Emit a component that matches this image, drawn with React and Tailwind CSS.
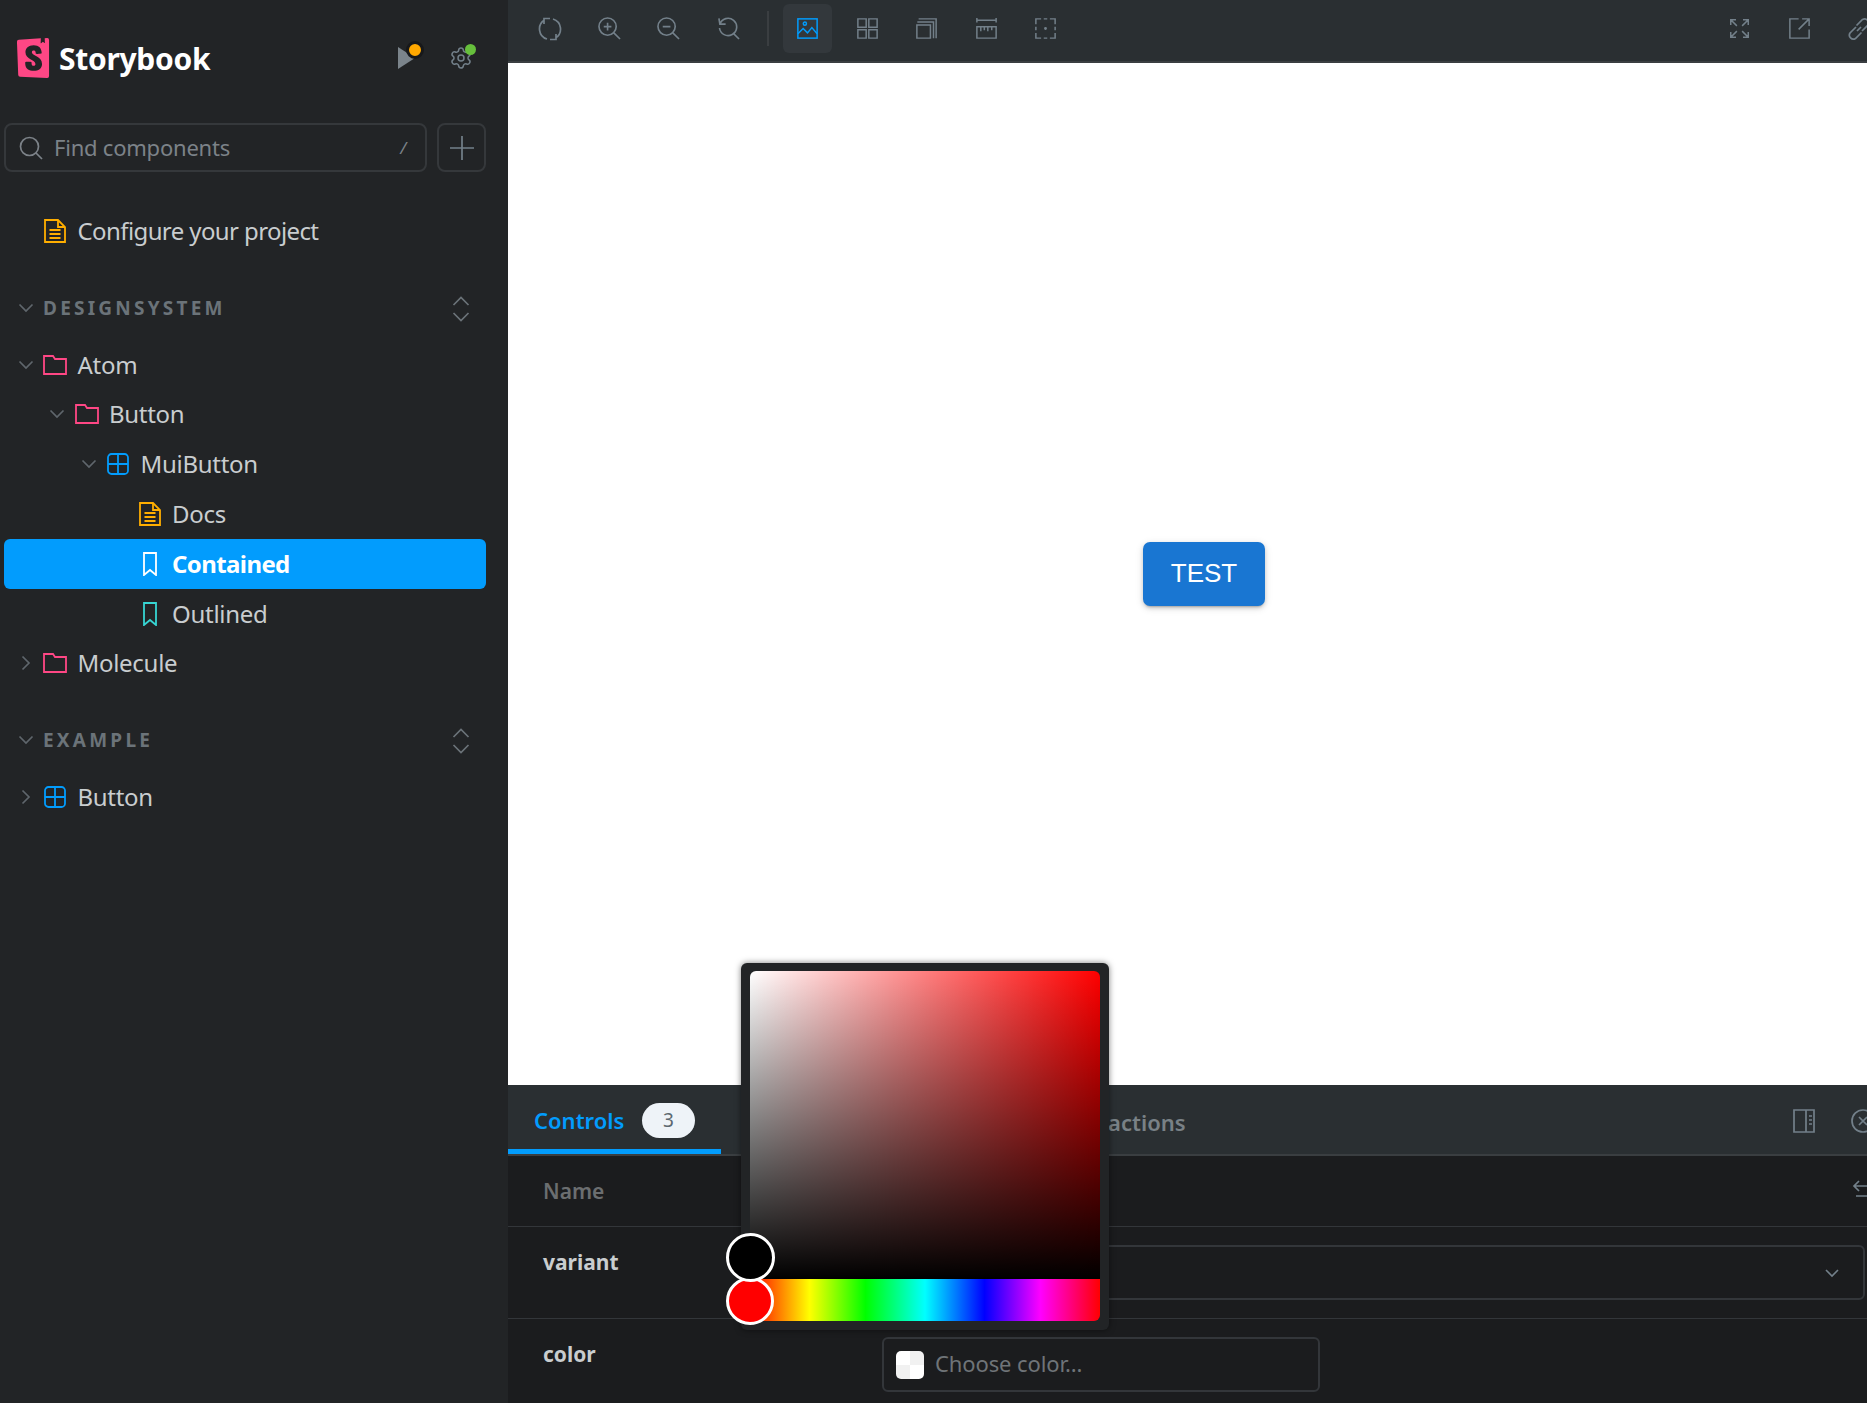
import React from "react";
import { SiStorybook } from "react-icons/si";
import { Settings } from "lucide-react";

const font = "font-['Noto_Sans',sans-serif]";

const Icon = ({ children, className = "", size = 24 }) => (
  <svg
    width={size}
    height={size}
    viewBox="0 0 24 24"
    fill="none"
    stroke="currentColor"
    strokeWidth="1.7"
    className={"shrink-0 " + className}
  >
    {children}
  </svg>
);

const Chevron = ({ open }) => (
  <svg width="16" height="16" viewBox="0 0 16 16" fill="none" stroke="#5f666c" strokeWidth="1.7" className="shrink-0">
    {open ? <path d="M1.5 4.5 8 11l6.5-6.5" /> : <path d="M4.5 1.5 11 8l-6.5 6.5" />}
  </svg>
);

const DocIcon = () => (
  <svg width="22" height="24" viewBox="0 0 22 24" fill="none" stroke="#ffae00" strokeWidth="1.8" className="shrink-0">
    <path d="M1 1h13l7 7v15H1z" />
    <path d="M14 1v7h7" />
    <path d="M5.5 11h11M5.5 15h11M5.5 19h11" />
  </svg>
);

const FolderIcon = () => (
  <svg width="24" height="20" viewBox="0 0 24 20" fill="none" stroke="#ff4785" strokeWidth="1.8" className="shrink-0">
    <path d="M1 1h9l2 3h11v15H1z" />
  </svg>
);

const ComponentIcon = () => (
  <svg width="22" height="22" viewBox="0 0 22 22" fill="none" stroke="#029cfd" strokeWidth="1.8" className="shrink-0">
    <rect x="1" y="1" width="20" height="20" rx="3.5" />
    <path d="M11 1v20M1 11h20" />
  </svg>
);

const BookmarkIcon = ({ color }) => (
  <svg width="14" height="24" viewBox="0 0 14 24" fill="none" stroke={color} strokeWidth="1.8" className="shrink-0">
    <path d="M1 1h12v22l-6-5-6 5z" />
  </svg>
);

const ExpandAll = () => (
  <svg width="18" height="26" viewBox="0 0 18 26" fill="none" stroke="#6b7379" strokeWidth="1.7">
    <path d="M1.5 9 9 1.5 16.5 9M1.5 17 9 24.5 16.5 17" />
  </svg>
);

const TreeRow = ({ level = 0, chevron, icon, label, active, tight }) => (
  <div
    className={
      "flex h-[49.8px] items-center rounded-md text-[24px] " +
      (active ? "bg-[#029cfd] font-bold text-white " : "text-[#c9cdcf] ") +
      (tight || active ? "tracking-[-0.025em]" : "tracking-[-0.012em]")
    }
    style={{ paddingLeft: 13.5 + level * 31.5 }}
  >
    <div className="flex w-[25px] shrink-0">{chevron !== undefined && <Chevron open={chevron} />}</div>
    <div className="flex w-[35px] shrink-0 items-center justify-center pr-[10px]">{icon}</div>
    <span>{label}</span>
  </div>
);

const SectionRow = ({ label, className = "" }) => (
  <div className={"flex h-[50px] items-center pl-[13.5px] pr-[16px] " + className}>
    <div className="flex w-[25.5px] shrink-0">
      <Chevron open />
    </div>
    <span className="text-[19px] font-bold tracking-[0.17em] text-[#6b7379]">{label}</span>
    <div className="ml-auto mt-[2px]">
      <ExpandAll />
    </div>
  </div>
);

const Sidebar = () => (
  <aside className="flex h-full w-[508px] shrink-0 flex-col bg-[#222426] px-1">
    <div className="relative flex h-[116px] shrink-0 items-center pl-[9px]">
      <SiStorybook size={40} className="text-[#ff4785]" />
      <span className="ml-[6px] text-[30px] font-bold tracking-[-0.01em] text-white">Storybook</span>
      <div className="absolute left-[394px] top-[47px] h-0 w-0 border-y-[11px] border-l-[17px] border-y-transparent border-l-[#7b848b]" />
      <div className="absolute left-[402px] top-[41px] h-[18px] w-[18px] rounded-full border-[3px] border-[#17181a] bg-[#ffa800]" />
      <div className="absolute left-[445px] top-[46px] text-[#73808a]">
        <Settings size={24} strokeWidth={1.5} />
        <div className="absolute left-[16px] top-[-2px] h-[11px] w-[11px] rounded-full bg-[#66bf3c]" />
      </div>
    </div>

    <div className="mt-[7px] flex h-[49px] shrink-0 gap-[10px]">
      <div className="flex w-[423px] items-center rounded-lg border-2 border-[#35383b] pl-[13px] pr-[19px] text-[22px] tracking-[-0.01em] text-[#7c8288]">
        <Icon>
          <circle cx="10.5" cy="10.5" r="9" />
          <path d="m17 17 6 6" />
        </Icon>
        <span className="ml-[11px]">Find components</span>
        <span className="ml-auto text-[17px] italic">/</span>
      </div>
      <div className="flex w-[49px] items-center justify-center rounded-lg border-2 border-[#35383b] text-[#73808a]">
        <Icon>
          <path d="M12 0v24M0 12h24" />
        </Icon>
      </div>
    </div>

    <div className="mt-[34px] w-[482px]">
      <TreeRow icon={<DocIcon />} label="Configure your project" tight />
    </div>

    <SectionRow label="DESIGNSYSTEM" className="mt-[27px] w-[482px]" />

    <div className="mt-[7px] w-[482px]">
      <TreeRow level={0} chevron={true} icon={<FolderIcon />} label="Atom" />
      <TreeRow level={1} chevron={true} icon={<FolderIcon />} label="Button" />
      <TreeRow level={2} chevron={true} icon={<ComponentIcon />} label="MuiButton" />
      <TreeRow level={3} icon={<DocIcon />} label="Docs" />
      <TreeRow level={3} icon={<BookmarkIcon color="#ffffff" />} label="Contained" active />
      <TreeRow level={3} icon={<BookmarkIcon color="#37d5d3" />} label="Outlined" />
      <TreeRow level={0} chevron={false} icon={<FolderIcon />} label="Molecule" />
    </div>

    <SectionRow label="EXAMPLE" className="mt-[27px] w-[482px]" />

    <div className="mt-[7px] w-[482px]">
      <TreeRow level={0} chevron={false} icon={<ComponentIcon />} label="Button" />
    </div>
  </aside>
);

const ToolIcon = ({ children, active, size = 21 }) => (
  <div
    className={
      "flex h-[49px] w-[49px] items-center justify-center rounded-md " +
      (active ? "bg-[#33383c] text-[#029cfd]" : "text-[#73808a]")
    }
  >
    <Icon size={size}>{children}</Icon>
  </div>
);

const Toolbar = () => (
  <div className="flex h-[63px] shrink-0 items-start gap-[10.5px] border-b-2 border-[#3a3e41] bg-[#2a2f32] pl-[17px] pr-[17px] pt-1">
    <ToolIcon size={24}>
      <path d="M6 7V1.500h6M6.500 3A10.500 10.500 0 0 0 9 22M18 17v5.500h-6M17.500 21A10.500 10.500 0 0 0 15 2" />
    </ToolIcon>
    <ToolIcon size={23}>
      <circle cx="10" cy="10" r="9" />
      <path d="m16.500 16.500 6.500 6.500M10 6v8M6 10h8" />
    </ToolIcon>
    <ToolIcon size={23}>
      <circle cx="10" cy="10" r="9" />
      <path d="m16.500 16.500 6.500 6.500M6 10h8" />
    </ToolIcon>
    <ToolIcon size={23}>
      <path d="M3 7.500a9 9 0 1 1-.4 4M2 1.500l1 6h6M16.500 16.500l6.500 6.500" />
    </ToolIcon>
    <div className="ml-[4px] mr-[3.5px] mt-[7px] h-[35px] w-[2px] shrink-0 bg-[#3a3e41]" />
    <ToolIcon active>
      <rect x="1" y="1" width="22" height="22" />
      <circle cx="9" cy="6.500" r="1.800" />
      <path d="m1 18 6-6 5 5 5-6 6 7" />
    </ToolIcon>
    <ToolIcon>
      <path d="M1 1h9.500v9.500H1zM13.500 1H23v9.500h-9.500zM1 13.500h9.500V23H1zM13.500 13.500H23V23h-9.500z" />
    </ToolIcon>
    <ToolIcon>
      <path d="M1 8h15.500v15H1zM1.500 4.500H20V23M3 1h20v22" />
    </ToolIcon>
    <ToolIcon>
      <path d="M1 0v5M23 0v5M1 2.500h22M1 10h22v13H1zM5.500 10v5M9.500 10v4M13.500 10v5M18 10v4" />
    </ToolIcon>
    <ToolIcon>
      <path d="M1 7V1h6M10 1h4M17 1h6v6M23 10v4M23 17v6h-6M14 23h-4M7 23H1v-6M1 14v-4" />
      <circle cx="12" cy="12" r="0.800" fill="currentColor" />
    </ToolIcon>

    <div className="ml-auto" />
    <ToolIcon>
      <path d="M9 9 2 2M2 8V2h6M15 9l7-7M16 2h6v6M9 15l-7 7M2 16v6h6M15 15l7 7M22 16v6h-6" />
    </ToolIcon>
    <ToolIcon>
      <path d="M11 1H1v22h22V13M11 13 23 1M15 1h8v8" />
    </ToolIcon>
    <ToolIcon size={24}>
      <path d="M10 14 14 10M9 10 3 16a4 4 0 0 0 5.500 5.500l6-6M15 14l6-6a4 4 0 0 0-5.500-5.500l-6 6" />
    </ToolIcon>
  </div>
);

const Canvas = () => (
  <div className="flex flex-1 items-center justify-center bg-white">
    <button className="flex h-[64px] w-[122px] items-center justify-center rounded-[7px] bg-[#1976d2] pb-[2px] font-['Liberation_Sans',sans-serif] text-[26px] text-white shadow-[0_3px_2px_-2px_rgba(0,0,0,0.2),0_2px_4px_0_rgba(0,0,0,0.14),0_2px_8px_0_rgba(0,0,0,0.12)]">
      TEST
    </button>
  </div>
);

const Panel = () => (
  <div className="flex h-[318px] shrink-0 flex-col bg-[#1b1c1e]">
    <div className="flex h-[71px] shrink-0 items-center border-b-2 border-[#3a3e41] bg-[#2a2f32] pr-[25px]">
      <div className="flex h-full w-[213px] items-center border-b-[5px] border-[#029cfd] pl-[26px] pt-[6px]">
        <span className="w-[90px] text-[22px] font-semibold text-[#029cfd]">Controls</span>
        <span className="ml-[18px] flex h-[35px] w-[53px] items-center justify-center rounded-full bg-[#eef3f8] text-[19px] text-[#5c6870]">3</span>
      </div>
      <span className="w-[333px] pt-[6px] text-center text-[22px] font-semibold text-[#798186]">Actions</span>
      <span className="pl-[1px] pt-[6px] text-[22px] font-semibold text-[#798186]">Interactions</span>
      <div className="ml-auto flex items-center gap-[35px] pt-[2px] text-[#73808a]">
        <Icon>
          <path d="M2 1h20v22H2zM14 1v22M17 7h3M17 11h3M17 15h3" />
        </Icon>
        <Icon>
          <circle cx="12" cy="12" r="11" />
          <path d="m8 8 8 8M16 8l-8 8" />
        </Icon>
      </div>
    </div>

    <div className="grid h-[71px] shrink-0 grid-cols-[374px_983px] items-center border-b border-[#33363a]">
      <span className="pl-[35px] pt-[2px] text-[21px] font-semibold text-[#6b6e70]">Name</span>
      <div className="flex justify-end text-[#73808a]">
        <div className="-mr-[11px]">
          <Icon>
            <path d="M7 2 2 7l5 5M2 7h18a3 3 0 0 1 3 3v4a3 3 0 0 1-3 3H4" />
          </Icon>
        </div>
      </div>
    </div>

    <div className="grid h-[92px] shrink-0 grid-cols-[374px_983px] border-b border-[#33363a]">
      <span className="pl-[35px] pt-[20px] text-[21px] font-bold text-[#c9cdcf]">variant</span>
      <div className="pt-[18px]">
        <div className="flex h-[55px] items-center justify-end rounded-md border-2 border-[#33363a] pr-[24px]">
          <svg width="14" height="10" viewBox="0 0 14 10" fill="none" stroke="#73808a" strokeWidth="1.6">
            <path d="M1 2l6 6 6-6" />
          </svg>
        </div>
      </div>
    </div>

    <div className="grid flex-1 grid-cols-[374px_983px]">
      <span className="pl-[35px] pt-[20px] text-[21px] font-bold text-[#c9cdcf]">color</span>
      <div className="pt-[18px]">
        <div className="flex h-[55px] w-[438px] items-center rounded-md border-2 border-[#33363a] pl-[12px]">
          <div className="grid h-[28px] w-[28px] grid-cols-2 grid-rows-2 overflow-hidden rounded-[5px]">
            <div className="bg-white" />
            <div className="bg-[#f1f1f1]" />
            <div className="bg-[#f1f1f1]" />
            <div className="bg-white" />
          </div>
          <span className="mb-[2px] ml-[11px] text-[22px] tracking-[-0.005em] text-[#6f7478]">Choose color...</span>
        </div>
      </div>
    </div>
  </div>
);

const ColorPopup = () => (
  <div className="absolute left-[741px] top-[963px] z-10 flex h-[367px] w-[368px] flex-col rounded-md bg-[#222426] px-[9px] pb-[9px] pt-[8px] shadow-[0_0_6px_rgba(0,0,0,0.5)]">
    <div className="relative h-[308px] rounded-t-md bg-[#f00] bg-[linear-gradient(to_top,#000,transparent),linear-gradient(to_right,#fff,transparent)]">
      <div className="absolute left-[-24px] top-[262px] z-10 h-[49px] w-[49px] rounded-full border-[3px] border-white bg-black" />
    </div>
    <div className="relative h-[42px] rounded-b-md bg-[linear-gradient(to_right,#f00_0%,#ff0_17%,#0f0_33%,#0ff_50%,#00f_67%,#f0f_83%,#f00_100%)]">
      <div className="absolute left-[-24px] top-[-2px] h-[48px] w-[48px] rounded-full border-[3px] border-white bg-[#f00]" />
    </div>
  </div>
);

export default function App() {
  return (
    <div className={"relative flex h-[1403px] w-[1867px] overflow-hidden bg-[#222426] " + font}>
      <Sidebar />
      <div className="min-w-0 flex-1 overflow-hidden">
        <div className="flex h-full w-[1392px] flex-col">
          <Toolbar />
          <Canvas />
          <Panel />
        </div>
      </div>
      <ColorPopup />
    </div>
  );
}
